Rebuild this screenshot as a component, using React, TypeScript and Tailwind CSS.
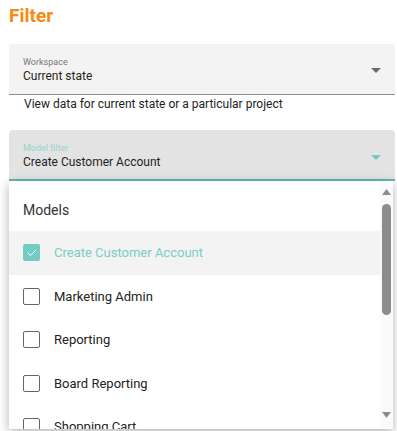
import { Check } from "lucide-react";

const models = [
  "Create Customer Account",
  "Marketing Admin",
  "Reporting",
  "Board Reporting",
  "Shopping Cart",
];

function Caret({ color }: { color: string }) {
  return (
    <svg width="10" height="5" viewBox="0 0 10 5" className="block">
      <path d="M0 0 L10 0 L5 5 Z" fill={color} />
    </svg>
  );
}

export default function App() {
  const selected = "Create Customer Account";

  return (
    <div className="w-[397px] h-[431px] overflow-hidden bg-white pl-[9px] pr-[2px] pt-[4px] font-['Roboto',sans-serif]">
      <h1 className="h-[24px] text-[19px] leading-[24px] font-bold text-[#f68b0f]">Filter</h1>

      {/* Workspace select */}
      <div className="mt-[16px] h-[51px] bg-[#f3f3f3] rounded-t-[4px] border-b border-[#8c8c8c] pl-[14px] pr-[14px] pt-[12px] flex items-start justify-between">
        <div>
          <div className="text-[9px] leading-[12px] text-[#777]">Workspace</div>
          <div className="text-[12px] leading-[17px] text-[#1f1f1f]">Current state</div>
        </div>
        <div className="mt-[12px]">
          <Caret color="#6b6b6b" />
        </div>
      </div>
      <p className="pl-[15px] pt-[1px] text-[12px] leading-[16px] text-[#222]">
        View data for current state or a particular project
      </p>

      {/* Model filter select (open) */}
      <div className="relative mt-[18px]">
        <div className="h-[51px] bg-[#e3e3e3] rounded-t-[4px] border-b-2 border-[#5dbcb1] pl-[14px] pr-[14px] pt-[12px] flex items-start justify-between">
          <div>
            <div className="text-[9px] leading-[12px] text-[#93d4cc]">Model filter</div>
            <div className="text-[12px] leading-[17px] text-[#1f1f1f]">Create Customer Account</div>
          </div>
          <div className="mt-[13px]">
            <Caret color="#72c9bf" />
          </div>
        </div>

        <div className="absolute left-0 top-full w-[384px] h-[248px] bg-white shadow-[0_3px_10px_rgba(0,0,0,0.3)] flex overflow-hidden">
          <div className="flex-1">
            <div className="h-[50px] pl-[14px] pt-[20px] text-[14px] leading-[18px] text-[#333]">Models</div>
            {models.map((m) => {
              const on = m === selected;
              return (
                <div
                  key={m}
                  className={`h-[43.5px] flex items-center pl-[14px] ${on ? "bg-[#f3f3f3]" : ""}`}
                >
                  {on ? (
                    <span className="w-[17px] h-[17px] rounded-[2px] bg-[#74cbc1] flex items-center justify-center">
                      <Check size={12} strokeWidth={2} color="#fff" />
                    </span>
                  ) : (
                    <span className="w-[17px] h-[17px] rounded-[2px] border-[1.5px] border-[#666]" />
                  )}
                  <span className={`ml-[14px] text-[13px] ${on ? "text-[#7acdc4]" : "text-[#222]"}`}>{m}</span>
                </div>
              );
            })}
          </div>

          {/* scrollbar */}
          <div className="w-[13px] bg-[#fafafa] flex flex-col items-center pt-[8px]">
            <svg width="9" height="6" viewBox="0 0 9 6">
              <path d="M0 6 L4.5 0 L9 6 Z" fill="#8c8c8c" />
            </svg>
            <div className="mt-[9px] w-[9px] h-[111px] rounded-full bg-[#8c8c8c]" />
            <div className="flex-1" />
            <svg width="9" height="6" viewBox="0 0 9 6" className="mb-[11px]">
              <path d="M0 0 L9 0 L4.5 6 Z" fill="#8c8c8c" />
            </svg>
          </div>
        </div>
      </div>
    </div>
  );
}
